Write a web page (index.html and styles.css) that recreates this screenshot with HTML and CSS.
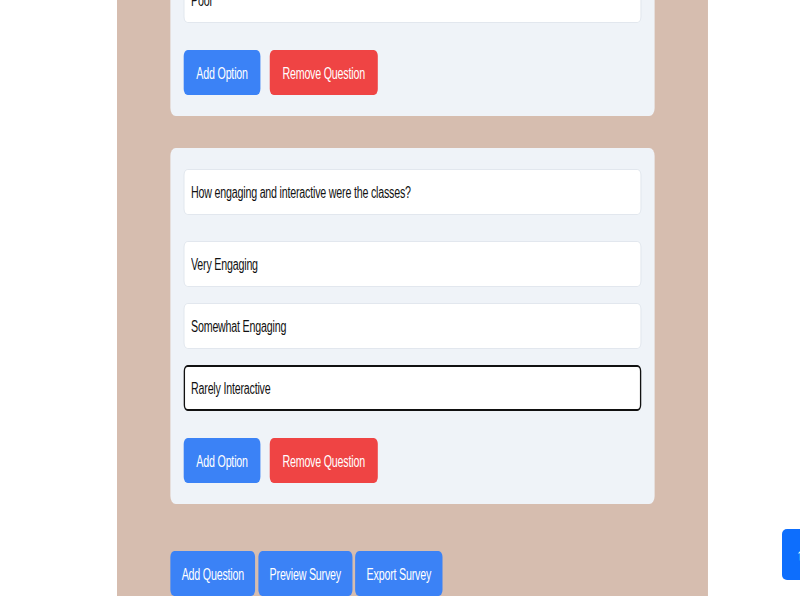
FILE: index.html
```html
<!DOCTYPE html>
<html lang="en">
<head>
    <meta charset="UTF-8">
    <meta name="viewport" content="width=device-width, initial-scale=1.0">
    <title>Survey Builder</title>
    <link rel="stylesheet" href="styles.css">
</head>
<body>
    <div class="page">
        <div id="questions">
            <div class="question-card">
                <input type="text" class="question-input" value="How would you rate the overall course content?">
                <div class="options">
                    <input type="text" class="option-input" value="Excellent">
                    <input type="text" class="option-input" value="Good">
                    <input type="text" class="option-input" value="Average">
                    <input type="text" class="option-input" value="Poor">
                </div>
                <div class="card-actions">
                    <button class="btn btn-blue">Add Option</button>
                    <button class="btn btn-red">Remove Question</button>
                </div>
            </div>

            <div class="question-card">
                <input type="text" class="question-input" value="How engaging and interactive were the classes?">
                <div class="options">
                    <input type="text" class="option-input" value="Very Engaging">
                    <input type="text" class="option-input" value="Somewhat Engaging">
                    <input type="text" class="option-input focused" value="Rarely Interactive">
                </div>
                <div class="card-actions">
                    <button class="btn btn-blue">Add Option</button>
                    <button class="btn btn-red">Remove Question</button>
                </div>
            </div>
        </div>

        <div class="survey-actions">
            <button class="btn btn-blue">Add Question</button>
            <button class="btn btn-blue">Preview Survey</button>
            <button class="btn btn-blue">Export Survey</button>
        </div>
    </div>

    <button class="top-btn">↑</button>
</body>
</html>
```

FILE: styles.css
```css
/* the whole page is drawn 2/3 as wide as it is laid out */
html {
    overflow-x: hidden;
}

body {
    margin: 0;
    padding: 0;
    background-color: #ffffff;
    font-family: 'Liberation Sans', 'Noto Sans', sans-serif;
    color: #111111;
}

.page {
    width: 886px;
    margin-left: 117px;
    min-height: 600px;
    background-color: #d6bdaf;
    padding: 0 80px;
    box-sizing: border-box;
    transform: scaleX(0.667);
    transform-origin: 0 0;
}

#questions {
    margin-top: -302px;
    display: flex;
    flex-direction: column;
    gap: 32px;
}

.question-card {
    background-color: #eff3f8;
    border-radius: 8px;
    padding: 21px 20px;
    display: flex;
    flex-direction: column;
}

.question-input,
.option-input {
    height: 46px;
    box-sizing: border-box;
    border: 1px solid #dde3ea;
    border-radius: 6px;
    padding: 2px 10px 0;
    font-family: inherit;
    font-size: 16px;
    letter-spacing: -0.3px;
    color: #111111;
    background-color: #ffffff;
    outline: none;
}

.question-input {
    margin-bottom: 26px;
}

.options {
    display: flex;
    flex-direction: column;
    gap: 16px;
}

.option-input.focused {
    border: 2px solid #111111;
    padding: 1px 9px 0;
}

.card-actions {
    margin-top: 27px;
    display: flex;
    gap: 14px;
}

.btn {
    height: 45px;
    border: none;
    border-radius: 6px;
    padding: 2px 19px 0;
    color: #ffffff;
    font-family: inherit;
    font-size: 16px;
    letter-spacing: -0.3px;
    cursor: pointer;
}

.btn-blue {
    background-color: #3b82f6;
}

.btn-red {
    background-color: #ef4444;
}

.survey-actions {
    margin-top: 47px;
}

.survey-actions .btn {
    padding: 2px 17px 0;
}

.top-btn {
    position: fixed;
    left: 782px;
    top: 529px;
    width: 18px;
    height: 51px;
    box-sizing: border-box;
    padding: 0 0 0 14px;
    border: none;
    border-radius: 5px 0 0 5px;
    background-color: #0d6efd;
    color: #ffffff;
    font-family: inherit;
    font-size: 16px;
    text-align: left;
    overflow: hidden;
    white-space: nowrap;
}
```
